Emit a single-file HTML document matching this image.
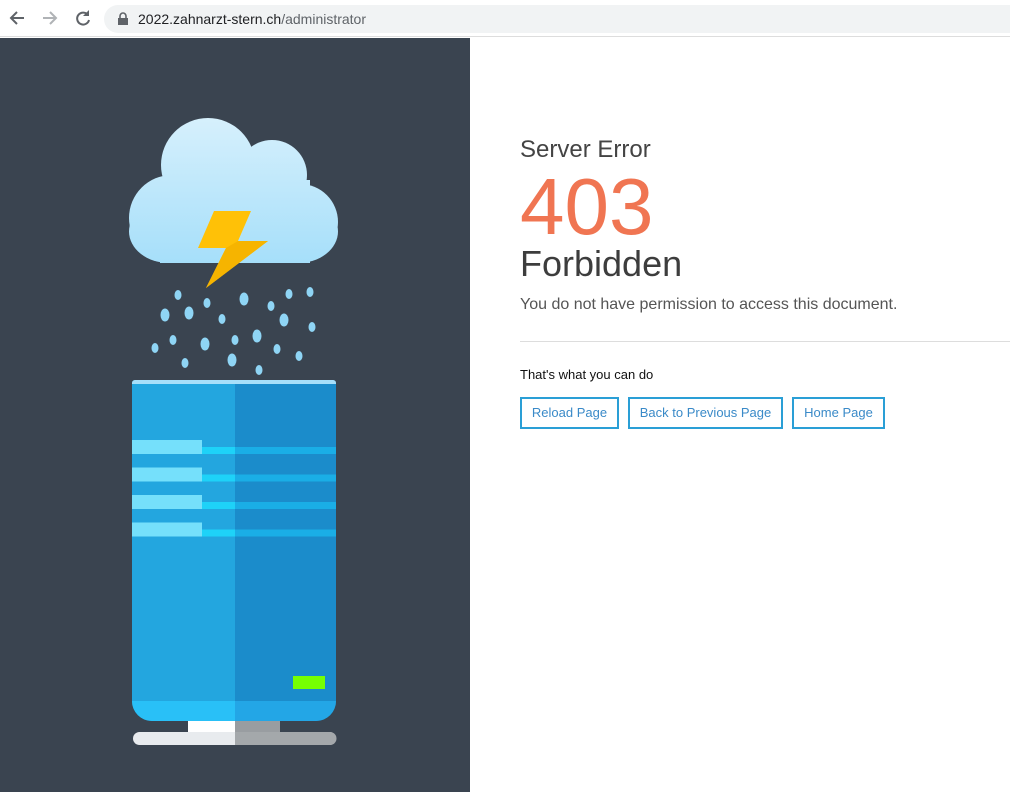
<!DOCTYPE html>
<html><head><meta charset="utf-8"><style>
*{margin:0;padding:0;box-sizing:border-box}
body{width:1010px;height:792px;overflow:hidden;background:#fff;font-family:"Liberation Sans",Arial,sans-serif;position:relative}
.bar{position:absolute;left:0;top:0;width:1010px;height:37px;background:#fff;border-bottom:1px solid #ddd}
.url{position:absolute;left:104px;top:5px;width:920px;height:28px;border-radius:14px;background:#f1f3f4}
.url span{position:absolute;left:34px;top:6px;font-size:14px;color:#202124}
.url span i{font-style:normal;color:#5f6368}
.left{position:absolute;left:0;top:38px;width:470px;height:754px;background:#3a4450}
.a{position:absolute;left:520px;color:#444}
.btn{position:absolute;top:397px;height:32px;border:2px solid #2a9fd6;color:#3a8ac8;font-size:13px;line-height:28px;text-align:center}
</style></head><body>
<div class="bar">
<svg width="100" height="37" style="position:absolute;left:0;top:0">
<path d="M24 18H11M17 12l-6 6 6 6" stroke="#5f6368" stroke-width="2" fill="none"/>
<path d="M43 18h13M50 12l6 6-6 6" stroke="#b0b3b6" stroke-width="2" fill="none"/>
<path d="M88 15a6 6 0 1 0 1 5" stroke="#5f6368" stroke-width="2" fill="none"/><path d="M89 10v6h-6z" fill="#5f6368"/>
</svg>
<div class="url"><svg width="12" height="14" style="position:absolute;left:13px;top:7px"><rect x="1" y="6" width="10" height="7" fill="#5f6368"/><path d="M3 6V4a3 3 0 0 1 6 0v2" stroke="#5f6368" stroke-width="1.6" fill="none"/></svg><span>2022.zahnarzt-stern.ch<i>/administrator</i></span></div>
</div>
<div class="left"></div>
<svg width="470" height="792" style="position:absolute;left:0;top:0">
<defs><linearGradient id="c" gradientUnits="userSpaceOnUse" x1="0" y1="118" x2="0" y2="263"><stop offset="0" stop-color="#d6f0fc"/><stop offset="1" stop-color="#a6dffa"/></linearGradient></defs>
<g fill="url(#c)">
<circle cx="208" cy="165" r="47"/><circle cx="272" cy="175" r="35"/><circle cx="172" cy="218" r="43"/><circle cx="300" cy="222" r="38"/>
<rect x="129" y="200" width="209" height="63" rx="40"/><rect x="160" y="180" width="150" height="83"/>
</g>
<path d="M214 211h37l-13 30h30l-62 47 20-40h-28z" fill="#ffc107"/>
<path d="M238 241h30l-62 47 20-40" fill="#f6b400"/>
<g fill="#8fd5f5">
<ellipse cx="178" cy="295" rx="3.5" ry="5"/><ellipse cx="207" cy="303" rx="3.5" ry="5"/><ellipse cx="244" cy="299" rx="4.5" ry="6.5"/><ellipse cx="271" cy="306" rx="3.5" ry="5"/><ellipse cx="289" cy="294" rx="3.5" ry="5"/><ellipse cx="310" cy="292" rx="3.5" ry="5"/>
<ellipse cx="165" cy="315" rx="4.5" ry="6.5"/><ellipse cx="189" cy="313" rx="4.5" ry="6.5"/><ellipse cx="222" cy="319" rx="3.5" ry="5"/><ellipse cx="284" cy="320" rx="4.5" ry="6.5"/><ellipse cx="312" cy="327" rx="3.5" ry="5"/>
<ellipse cx="173" cy="340" rx="3.5" ry="5"/><ellipse cx="205" cy="344" rx="4.5" ry="6.5"/><ellipse cx="235" cy="340" rx="3.5" ry="5"/><ellipse cx="257" cy="336" rx="4.5" ry="6.5"/>
<ellipse cx="155" cy="348" rx="3.5" ry="5"/><ellipse cx="277" cy="349" rx="3.5" ry="5"/><ellipse cx="299" cy="356" rx="3.5" ry="5"/><ellipse cx="185" cy="363" rx="3.5" ry="5"/><ellipse cx="232" cy="360" rx="4.5" ry="6.5"/><ellipse cx="259" cy="370" rx="3.5" ry="5"/>
</g>
<clipPath id="s"><path d="M132 383a3 3 0 0 1 3-3h198a3 3 0 0 1 3 3v318a20 20 0 0 1-20 20H152a20 20 0 0 1-20-20z"/></clipPath>
<g clip-path="url(#s)">
<rect x="132" y="380" width="103" height="341" fill="#23a6df"/><rect x="235" y="380" width="101" height="341" fill="#1b8ccb"/>
<rect x="132" y="380" width="204" height="4" fill="#a6dffa"/>
<rect x="132" y="701" width="103" height="20" fill="#29c0f7"/><rect x="235" y="701" width="101" height="20" fill="#23a6e6"/>
<g id="st"><rect x="132" y="440" width="70" height="14" fill="#75e0fb"/><rect x="202" y="447" width="33" height="7" fill="#1ed2f8"/><rect x="235" y="447" width="101" height="7" fill="#1aaee6"/></g>
<use href="#st" y="27.5"/><use href="#st" y="55"/><use href="#st" y="82.5"/>
</g>
<rect x="293" y="676" width="32" height="13" fill="#76ff03"/>
<rect x="188" y="721" width="47" height="12" fill="#fff"/><rect x="235" y="721" width="45" height="12" fill="#999da1"/>
<rect x="133" y="732" width="203" height="13" rx="6.5" fill="#e8ebee"/><path d="M235 732h95a6.5 6.5 0 0 1 0 13h-95z" fill="#a4a8ab"/>
</svg>
<div class="a" style="top:136px;font-size:24px">Server Error</div>
<div class="a" style="top:164px;font-size:80px;color:#f07552;line-height:86px">403</div>
<div class="a" style="top:243px;font-size:36px;color:#3d3d3d">Forbidden</div>
<div class="a" style="top:296px;font-size:16px;color:#555">You do not have permission to access this document.</div>
<div style="position:absolute;left:520px;top:341px;width:490px;height:1px;background:#ddd"></div>
<div class="a" style="top:367px;font-size:13px;color:#111">That's what you can do</div>
<div class="btn" style="left:520px;width:99px">Reload Page</div>
<div class="btn" style="left:628px;width:155px">Back to Previous Page</div>
<div class="btn" style="left:792px;width:93px">Home Page</div>
</body></html>
